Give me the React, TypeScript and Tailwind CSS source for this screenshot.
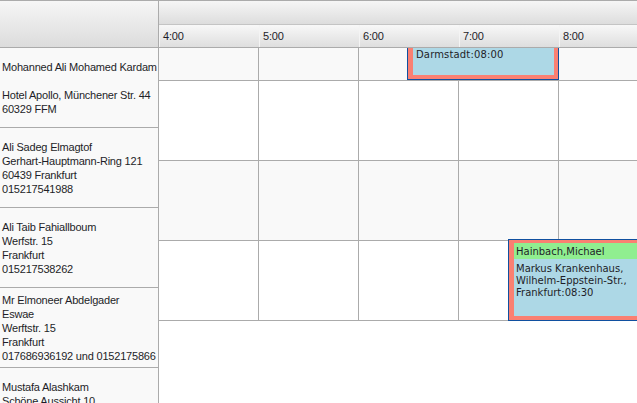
import React from "react";

const people: string[][] = [
  ["Mohanned Ali Mohamed Kardam", "", "Hotel Apollo, Münchener Str. 44", "60329 FFM"],
  ["Ali Sadeg Elmagtof", "Gerhart-Hauptmann-Ring 121", "60439 Frankfurt", "015217541988"],
  ["Ali Taib Fahiallboum", "Werfstr. 15", "Frankfurt", "015217538262"],
  ["Mr Elmoneer Abdelgader", "Eswae", "Werftstr. 15", "Frankfurt", "017686936192 und 0152175866"],
  ["Mustafa Alashkam", "Schöne Aussicht 10", "Frankfurt", "0152175"],
];

const hours = ["4:00", "5:00", "6:00", "7:00", "8:00"];

function GridRow({ h, gray }: { h: "short" | "tall"; gray: boolean }) {
  return (
    <div
      className={
        "flex shrink-0 border-b border-[#ababab] " +
        (h === "short" ? "h-[33px] " : "h-[80px] ") +
        (gray ? "bg-[#f9f9f9]" : "bg-white")
      }
    >
      {hours.map((x) => (
        <div key={x} className="w-[100px] shrink-0 border-r border-[#ababab]" />
      ))}
    </div>
  );
}

export default function App() {
  return (
    <div className="relative w-[637px] h-[403px] overflow-hidden bg-white font-['Liberation_Sans',Arial,sans-serif] text-[11px] tracking-[-0.2px] text-[#1e1e28]">
      <div className="flex h-full">
        {/* left column */}
        <div className="w-[159px] shrink-0 flex flex-col border-r border-[#ababab] bg-[#f9f9f9]">
          <div className="h-[48px] shrink-0 border-t border-b border-[#ababab] bg-gradient-to-b from-[#f6f6f6] to-[#dcdcdc]" />
          {people.map((lines, i) => (
            <div
              key={i}
              className="h-[80px] shrink-0 border-b border-[#ababab] flex flex-col justify-center pl-[2px] overflow-hidden whitespace-nowrap leading-[14px]"
            >
              {lines.map((l, j) => (
                <div key={j} className="h-[14px]">
                  {l}
                </div>
              ))}
            </div>
          ))}
        </div>
        {/* right side */}
        <div className="flex-1 flex flex-col overflow-hidden">
          <div className="shrink-0 border-t border-[#ababab]">
            <div className="h-[24px] border-b border-[#c4c4c4] bg-gradient-to-b from-[#f6f6f6] to-[#dddddd]" />
            <div className="flex h-[23px] border-b border-[#ababab] bg-gradient-to-b from-[#f8f8f8] to-[#dedede]">
              {hours.map((x) => (
                <div
                  key={x}
                  className="w-[100px] shrink-0 border-l border-[#f4f4f4] pl-[3px] flex items-center"
                >
                  {x}
                </div>
              ))}
            </div>
          </div>
          <GridRow h="short" gray />
          <GridRow h="tall" gray={false} />
          <GridRow h="tall" gray />
          <GridRow h="tall" gray={false} />
        </div>
      </div>

      {/* event 1 */}
      <div className="absolute left-[407px] top-[48px] w-[152px] h-[32px] border-x border-b border-[#1050a0] bg-[#fa8072] pl-[5px] pr-[4px] pb-[4px] font-['DejaVu_Sans',Verdana,sans-serif] text-[10px] tracking-[0.15px] leading-[13px] text-[#1e1e28]">
        <div className="h-full bg-[#add8e6] pl-[3px] whitespace-nowrap overflow-hidden">
          Darmstadt:08:00
        </div>
      </div>

      {/* event 2 */}
      <div className="absolute left-[508px] top-[239px] w-[200px] h-[82px] border border-[#1050a0] bg-[#fa8072] pl-[5px] pt-[3px] pr-[4px] pb-[4px] font-['DejaVu_Sans',Verdana,sans-serif] text-[10px] tracking-normal text-[#1e1e28]">
        <div className="h-full flex flex-col bg-[#add8e6]">
          <div className="h-[16px] shrink-0 bg-[#90ee90] pl-[2px] pt-[2px] leading-[13px] whitespace-nowrap">
            Hainbach,Michael
          </div>
          <div className="pl-[2px] pt-[4px] leading-[12px] whitespace-nowrap">
            Markus Krankenhaus,
            <br />
            Wilhelm-Eppstein-Str.,
            <br />
            Frankfurt:08:30
          </div>
        </div>
      </div>
    </div>
  );
}
